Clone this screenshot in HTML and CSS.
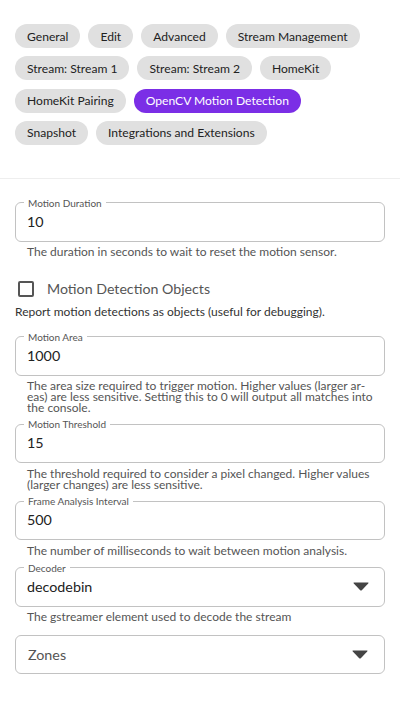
FILE: index.html
```html
<!DOCTYPE html>
<html lang="en">
<head>
<meta charset="utf-8">
<title>OpenCV Motion Detection</title>
<link rel="stylesheet" href="styles.css">
</head>
<body>
<nav class="chips">
  <span class="chip">General</span>
  <span class="chip">Edit</span>
  <span class="chip">Advanced</span>
  <span class="chip">Stream Management</span>
  <span class="chip">Stream: Stream 1</span>
  <span class="chip">Stream: Stream 2</span>
  <span class="chip">HomeKit</span>
  <span class="chip">HomeKit Pairing</span>
  <span class="chip chip-active">OpenCV Motion Detection</span>
  <span class="chip">Snapshot</span>
  <span class="chip">Integrations and Extensions</span>
</nav>
<hr class="divider">
<form class="form">
  <div class="group">
    <fieldset class="field">
      <legend class="field-label">Motion Duration</legend>
      <div class="field-value">10</div>
    </fieldset>
    <p class="helper">The duration in seconds to wait to reset the motion sensor.</p>
  </div>

  <div class="group group-check">
    <label class="check-row">
      <span class="checkbox"></span>
      <span class="check-label">Motion Detection Objects</span>
    </label>
    <p class="helper helper-plain">Report motion detections as objects (useful for debugging).</p>
  </div>

  <div class="group">
    <fieldset class="field">
      <legend class="field-label">Motion Area</legend>
      <div class="field-value">1000</div>
    </fieldset>
    <p class="helper">The area size required to trigger motion. Higher values (larger ar&shy;eas) are less sensitive. Setting this to 0 will output all matches into the console.</p>
  </div>

  <div class="group">
    <fieldset class="field">
      <legend class="field-label">Motion Threshold</legend>
      <div class="field-value">15</div>
    </fieldset>
    <p class="helper">The threshold required to consider a pixel changed. Higher values (larger changes) are less sensitive.</p>
  </div>

  <div class="group">
    <fieldset class="field">
      <legend class="field-label">Frame Analysis Interval</legend>
      <div class="field-value">500</div>
    </fieldset>
    <p class="helper">The number of milliseconds to wait between motion analysis.</p>
  </div>

  <div class="group">
    <fieldset class="field">
      <legend class="field-label">Decoder</legend>
      <div class="field-value field-select">
        <span>decodebin</span>
        <svg class="arrow" width="16" height="9" viewBox="0 0 16 9"><path d="M1 0.5 H15 Q16 0.5 15.2 1.4 L8.8 8.2 Q8 9 7.2 8.2 L0.8 1.4 Q0 0.5 1 0.5 Z" fill="#444"/></svg>
      </div>
    </fieldset>
    <p class="helper">The gstreamer element used to decode the stream</p>
  </div>

  <div class="select-box">
    <span>Zones</span>
    <svg class="arrow" width="16" height="9" viewBox="0 0 16 9"><path d="M1 0.5 H15 Q16 0.5 15.2 1.4 L8.8 8.2 Q8 9 7.2 8.2 L0.8 1.4 Q0 0.5 1 0.5 Z" fill="#444"/></svg>
  </div>
</form>
</body>
</html>
```

FILE: styles.css
```css
* { box-sizing: border-box; }

body {
  margin: 0;
  background: #fff;
  font-family: Lato, "Noto Sans", sans-serif;
  color: #222;
}

.chips {
  display: flex;
  flex-wrap: wrap;
  column-gap: 8px;
  row-gap: 8.3px;
  padding: 24px 24px 0 15px;
}

.chip {
  display: inline-flex;
  align-items: center;
  height: 24px;
  padding: 0 12px;
  border-radius: 12px;
  background: #e0e0e0;
  color: #222;
  font-size: 12.1px;
  white-space: nowrap;
}

.chip-active {
  background: #7b2ee6;
  color: #fff;
}

.divider {
  margin: 33px 0 0;
  border: 0;
  border-top: 1px solid #eeeeee;
  height: 0;
}

.form {
  display: flex;
  flex-direction: column;
  padding: 19px 15px 0;
}

.group {
  margin-bottom: 6px;
}

.field {
  margin: 0;
  padding: 0 11px;
  border: 1px solid #c2c2c2;
  border-radius: 6px;
  min-width: 0;
}

.field-label {
  padding: 0 4px;
  margin-left: -3px;
  font-size: 10px;
  line-height: 10px;
  color: #555;
}

.field-value {
  padding: 5px 0 10px;
  font-size: 14.3px;
  line-height: 18px;
  color: #222;
}

.field-select {
  display: flex;
  justify-content: space-between;
  align-items: center;
  padding-right: 4px;
}

.arrow {
  display: block;
}

.helper {
  margin: 5.5px 0 0;
  padding: 0 12px;
  font-size: 12px;
  line-height: 10.7px;
  color: #555;
  hyphens: manual;
}

.helper-plain {
  padding: 0;
  margin-top: 8.7px;
  color: #333;
}

.group-check {
  margin-top: 15.8px;
  margin-bottom: 14.6px;
}

.check-row {
  display: flex;
  align-items: center;
  gap: 13px;
  padding-left: 3px;
}

.checkbox {
  width: 16px;
  height: 16px;
  border: 2px solid #555;
  border-radius: 2px;
  flex: none;
}

.check-label {
  font-size: 14.2px;
  line-height: 18px;
  color: #555;
}

.select-box {
  display: flex;
  justify-content: space-between;
  align-items: center;
  height: 39px;
  margin-top: 5.8px;
  padding: 0 16px 0 12px;
  border: 1px solid #c2c2c2;
  border-radius: 6px;
  font-size: 14.3px;
  color: #555;
}
```
